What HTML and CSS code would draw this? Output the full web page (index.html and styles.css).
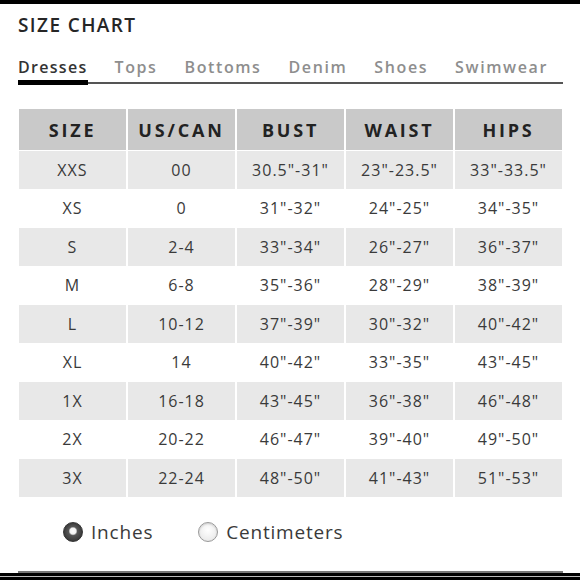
FILE: index.html
```html
<!DOCTYPE html>
<html>
<head>
<meta charset="utf-8">
<link rel="stylesheet" href="styles.css">
</head>
<body>
<div class="topbar"></div>
<main class="wrap">
  <h1 class="title">SIZE CHART</h1>
  <nav class="tabs">
    <span class="tab active">Dresses</span>
    <span class="tab">Tops</span>
    <span class="tab">Bottoms</span>
    <span class="tab">Denim</span>
    <span class="tab">Shoes</span>
    <span class="tab">Swimwear</span>
  </nav>
  <table class="chart">
    <thead>
      <tr><th>SIZE</th><th>US/CAN</th><th>BUST</th><th>WAIST</th><th>HIPS</th></tr>
    </thead>
    <tbody>
      <tr><td>XXS</td><td>00</td><td>30.5"-31"</td><td>23"-23.5"</td><td>33"-33.5"</td></tr>
      <tr><td>XS</td><td>0</td><td>31"-32"</td><td>24"-25"</td><td>34"-35"</td></tr>
      <tr><td>S</td><td>2-4</td><td>33"-34"</td><td>26"-27"</td><td>36"-37"</td></tr>
      <tr><td>M</td><td>6-8</td><td>35"-36"</td><td>28"-29"</td><td>38"-39"</td></tr>
      <tr><td>L</td><td>10-12</td><td>37"-39"</td><td>30"-32"</td><td>40"-42"</td></tr>
      <tr><td>XL</td><td>14</td><td>40"-42"</td><td>33"-35"</td><td>43"-45"</td></tr>
      <tr><td>1X</td><td>16-18</td><td>43"-45"</td><td>36"-38"</td><td>46"-48"</td></tr>
      <tr><td>2X</td><td>20-22</td><td>46"-47"</td><td>39"-40"</td><td>49"-50"</td></tr>
      <tr><td>3X</td><td>22-24</td><td>48"-50"</td><td>41"-43"</td><td>51"-53"</td></tr>
    </tbody>
  </table>
  <div class="units">
    <label class="unit"><span class="radio checked"></span>Inches</label>
    <label class="unit"><span class="radio"></span>Centimeters</label>
  </div>
</main>
<div class="bottom">
  <div class="bottom-line"></div>
  <div class="bottom-bar"></div>
</div>
</body>
</html>
```
FILE: styles.css
```css
html, body {
  margin: 0;
  padding: 0;
  background: #fff;
}
body {
  width: 580px;
  height: 580px;
  overflow: hidden;
  font-family: "Open Sans", Lato, sans-serif;
  color: #333;
  display: flex;
  flex-direction: column;
}
.topbar {
  height: 4px;
  background: #000;
}
.wrap {
  padding: 0 17px 0 18px;
  flex: 1;
}
.title {
  margin: 10px 0 0;
  font-size: 19px;
  font-weight: 600;
  color: #262626;
  letter-spacing: 1.4px;
  line-height: 22px;
}
.tabs {
  margin-top: 22px;
  display: flex;
  gap: 27px;
  border-bottom: 2px solid #555;
  height: 24px;
}
.tab {
  font-size: 16px;
  font-weight: 600;
  color: #8e8e8e;
  letter-spacing: 1.6px;
  line-height: 18px;
}
.tab.active {
  color: #333;
  letter-spacing: 1.3px;
  position: relative;
}
.tab.active::after {
  content: "";
  position: absolute;
  left: 0;
  right: 0;
  top: 22px;
  height: 5px;
  background: #000;
}
.chart {
  margin-top: 24px;
  width: 547px;
  margin-left: -1px;
  border-collapse: separate;
  border-spacing: 2px 1px;
  table-layout: fixed;
}
.chart th {
  background: #c9c9c9;
  height: 41px;
  font-size: 18px;
  font-weight: 700;
  color: #222;
  letter-spacing: 2.8px;
  padding: 0;
  text-align: center;
}
.chart td {
  height: 37.5px;
  padding: 0;
  text-align: center;
  font-size: 16px;
  color: #3a3a3a;
  letter-spacing: 1px;
}
.chart tbody tr:nth-child(odd) td {
  background: #e8e8e8;
}
.units {
  display: flex;
  align-items: center;
  gap: 45px;
  padding-left: 45px;
  margin-top: 21px;
}
.unit {
  display: flex;
  align-items: center;
  gap: 8px;
  font-size: 19px;
  color: #3a3a3a;
  letter-spacing: 0.8px;
}
.radio {
  width: 20px;
  height: 20px;
  border-radius: 50%;
  box-sizing: border-box;
  border: 1px solid #999;
  background: radial-gradient(circle at 50% 40%, #fff 0%, #e4e4e4 100%);
  box-shadow: inset 0 1px 2px rgba(0,0,0,0.15);
}
.radio.checked {
  border: 1px solid #333;
  background: radial-gradient(circle at 50% 45%, #fff 0, #f2f2f2 3px, #555 4.5px, #3a3a3a 10px);
}
.bottom {
  height: 9px;
}
.bottom-line {
  margin: 0 17px 0 18px;
  height: 2px;
  background: #777;
}
.bottom-bar {
  height: 7px;
  background: linear-gradient(#000 0 3px, #bbb 3px 4px, #000 4px);
}
```
